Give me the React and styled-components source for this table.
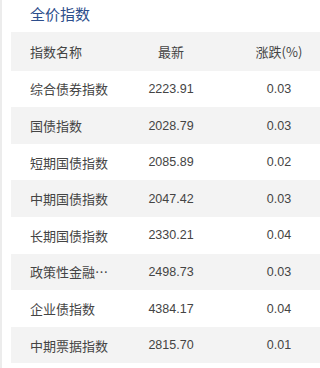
import React from "react";
import styled, { createGlobalStyle } from "styled-components";

const Global = createGlobalStyle`
  html, body { margin: 0; padding: 0; background: #fff; overflow: hidden; }
  body { font-family: "Noto Sans CJK SC", "Liberation Sans", sans-serif; }
`;

const Page = styled.div`
  width: 320px;
  height: 368px;
  box-sizing: border-box;
  border-left: 2px solid #ececec;
  padding-left: 9px;
  overflow: hidden;
`;

const Title = styled.div`
  height: 32px;
  padding-left: 19px;
  font-size: 15px;
  line-height: 27px;
  color: #2d4e8c;
`;

const Table = styled.div`
  width: 325px;
  display: flex;
  flex-direction: column;
`;

const Row = styled.div`
  display: grid;
  grid-template-columns: 109px 102px 114px;
  align-items: center;
  height: ${(p) => (p.$header ? "38.7px" : "36.6px")};
  background: ${(p) => (p.$alt ? "#f3f3f3" : "#fff")};
  font-size: 13px;
  color: #444;
`;

const NameCell = styled.div`
  padding-left: 19px;
  white-space: nowrap;
  overflow: hidden;
  text-overflow: ellipsis;
`;

const NumCell = styled.div`
  text-align: center;
  font-family: "Liberation Sans", "Noto Sans CJK SC", sans-serif;
  font-size: 12.5px;
`;

const HeadCell = styled.div`
  text-align: center;
`;

const data = [
  ["综合债券指数", "2223.91", "0.03"],
  ["国债指数", "2028.79", "0.03"],
  ["短期国债指数", "2085.89", "0.02"],
  ["中期国债指数", "2047.42", "0.03"],
  ["长期国债指数", "2330.21", "0.04"],
  ["政策性金融债指数", "2498.73", "0.03"],
  ["企业债指数", "4384.17", "0.04"],
  ["中期票据指数", "2815.70", "0.01"],
];

export default function App() {
  return (
    <>
      <Global />
      <Page>
        <Title>全价指数</Title>
        <Table>
          <Row $header $alt>
            <NameCell>指数名称</NameCell>
            <HeadCell>最新</HeadCell>
            <HeadCell>涨跌(%)</HeadCell>
          </Row>
          {data.map(([n, v, c], i) => (
            <Row key={n} $alt={i % 2 === 1}>
              <NameCell>{n}</NameCell>
              <NumCell>{v}</NumCell>
              <NumCell>{c}</NumCell>
            </Row>
          ))}
        </Table>
      </Page>
    </>
  );
}
